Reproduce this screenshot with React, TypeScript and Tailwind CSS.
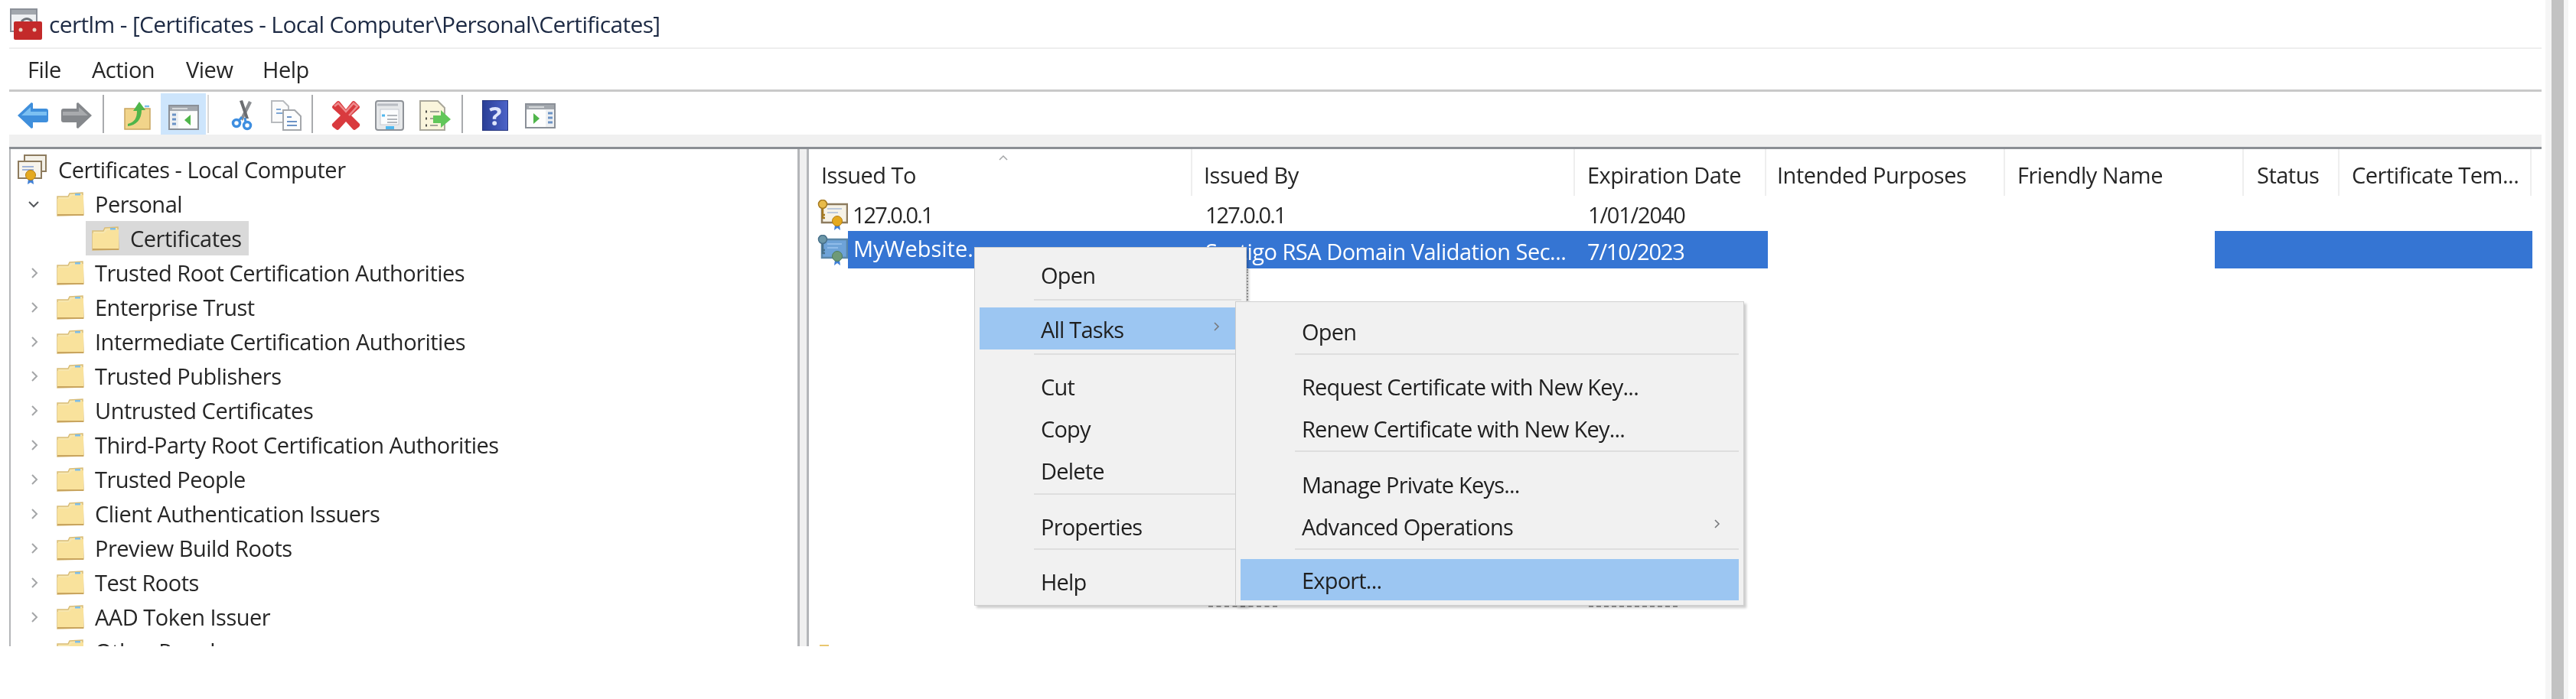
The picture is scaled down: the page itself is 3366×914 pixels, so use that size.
import type { ReactNode } from 'react'

const TREE = [
  'Trusted Root Certification Authorities',
  'Enterprise Trust',
  'Intermediate Certification Authorities',
  'Trusted Publishers',
  'Untrusted Certificates',
  'Third-Party Root Certification Authorities',
  'Trusted People',
  'Client Authentication Issuers',
  'Preview Build Roots',
  'Test Roots',
  'AAD Token Issuer',
  'Other People',
]

function Folder({ className = '' }: { className?: string }) {
  return (
    <svg width="36" height="32" viewBox="0 0 36 32" className={`shrink-0 ${className}`}>
      <path d="M1 6 L15 6 L17 2 L34 1 L35 30 L1 31 Z" fill="#f7e6ae" stroke="#d9bd78" strokeWidth="1.5" />
      <path d="M1 9 L16 9 L20 5 L35 4 L35 30 L1 31 Z" fill="#f9e29c" />
      <rect x="24" y="2" width="7" height="2.5" fill="#7dbde8" />
      <path d="M1 30 H35" stroke="#c9a55f" strokeWidth="2" />
    </svg>
  )
}

function Cert({ selected = false }: { selected?: boolean }) {
  const frame = selected ? '#5b87a8' : '#8d7b5e'
  const paper = selected ? '#6ea3d8' : '#f6f2e6'
  const gold = selected ? '#6f9a78' : '#e4a91f'
  return (
    <svg width="41" height="40" viewBox="0 0 41 40" className="shrink-0">
      <rect x="7" y="6" width="33" height="24" fill={paper} stroke={frame} strokeWidth="2.5" />
      <path d="M14 12 H33 M14 17 H28" stroke={selected ? '#9cc5ee' : '#a9bbd6'} strokeWidth="1.5" />
      <circle cx="8" cy="6" r="5.5" fill={selected ? '#6c97a8' : '#e8bb4a'} stroke={selected ? '#47708a' : '#a5791f'} strokeWidth="1.5" />
      <path d="M8 11 V25 M8 20 H11 M8 24 H11" stroke={selected ? '#47708a' : '#a5791f'} strokeWidth="2.5" />
      <path d="M24 33 L23 40 L27 37 L31 40 L30 33 Z" fill="#3f7fd6" />
      <circle cx="27" cy="28" r="6.5" fill={gold} stroke={selected ? '#4f7d5c' : '#b47e12'} strokeWidth="1" />
    </svg>
  )
}

function RootCert() {
  return (
    <svg width="40" height="40" viewBox="0 0 40 40" className="shrink-0">
      <rect x="10" y="1" width="28" height="21" fill="#f4f1e8" stroke="#8d7b5e" strokeWidth="2" />
      <rect x="2" y="9" width="30" height="22" fill="#f7f4ec" stroke="#8d7b5e" strokeWidth="2" />
      <path d="M7 16 H22 M7 20 H22" stroke="#9fb3d8" strokeWidth="2" />
      <path d="M15 32 L14 39 L18 36.5 L22 39 L21 32 Z" fill="#3f7fd6" />
      <circle cx="18" cy="27" r="6.5" fill="#e4a91f" stroke="#b47e12" strokeWidth="1" />
    </svg>
  )
}

function Arrow({ flip = false, dark, light }: { flip?: boolean; dark: string; light: string }) {
  return (
    <svg width="41" height="36" viewBox="0 0 41 36" className={`shrink-0 ${flip ? '-scale-x-100' : ''}`}>
      <path d="M1 18 L19 1 L21 2 V9 L38 9 Q41 9 41 12 V24 Q41 27 38 27 L21 27 V34 L19 35 Z" fill={dark} />
      <path d="M6 18 L18 7 V13 H39 V18 Z" fill={light} />
    </svg>
  )
}

function UpFolder() {
  return (
    <svg width="36" height="38" viewBox="0 0 36 38" className="shrink-0">
      <path d="M1 10 H34 V37 H1 Z" fill="#f1d48a" stroke="#c9a55f" strokeWidth="1.5" />
      <path d="M27 7 H33" stroke="#7dbde8" strokeWidth="2.5" />
      <path d="M5 30 C14 28 17 22 17 13 L12 13 L20 1 L28 12 L23 12 C23 24 16 32 5 33 Z" fill="#4fb54a" />
    </svg>
  )
}

function Pane({ mode }: { mode: 'left' | 'right' }) {
  return (
    <svg width="40" height="33" viewBox="0 0 40 33" className="shrink-0">
      <rect x="1" y="1" width="38" height="31" fill="#eef0f2" stroke="#8b9098" strokeWidth="2" />
      <rect x="2" y="2" width="36" height="6" fill="#a2a7ad" />
      <path d="M5 5 H25" stroke="#e6e8ea" strokeWidth="1.5" />
      <rect x={mode === 'left' ? 13 : 2} y="9" width="25" height="22" fill="#fdfdfd" />
      <path d={mode === 'left' ? 'M5 13 H10 M5 19 H10 M5 25 H10' : 'M30 13 H36 M30 19 H36 M30 25 H36'} stroke="#6c93c6" strokeWidth="3" />
      <path d={mode === 'left' ? 'M29 13 L21 20 L29 27 Z' : 'M11 13 L19 20 L11 27 Z'} fill="#4fb54a" />
    </svg>
  )
}

function Scissors() {
  return (
    <svg width="30" height="40" viewBox="0 0 30 40" className="shrink-0">
      <path d="M12 24 L23 1 L27 3 L15 27 Z" fill="#8d8f93" />
      <path d="M19 24 L11 1 L15 0 L23 24 Z" fill="#6a6c70" />
      <circle cx="7" cy="30" r="4.5" fill="none" stroke="#3e8ee0" strokeWidth="3.5" />
      <circle cx="21" cy="33" r="4.5" fill="none" stroke="#3e8ee0" strokeWidth="3.5" />
      <path d="M10 27 L14 22 M19 29 L18 23" stroke="#3e8ee0" strokeWidth="3" />
    </svg>
  )
}

function CopyDocs() {
  return (
    <svg width="40" height="40" viewBox="0 0 40 40" className="shrink-0">
      <path d="M1 1 H16 L23 8 V29 H1 Z" fill="#fbfbfb" stroke="#b8bbbf" strokeWidth="2" />
      <path d="M7 12 H13 M7 17 H17" stroke="#7ea6d4" strokeWidth="2" />
      <path d="M16 13 H31 L39 21 V39 H16 Z" fill="#fdfdfd" stroke="#a5a8ac" strokeWidth="2" />
      <path d="M21 22 H27 M21 28 H34 M21 33 H34" stroke="#6c93c6" strokeWidth="2" />
    </svg>
  )
}

function Delete() {
  return (
    <svg width="40" height="40" viewBox="0 0 40 40" className="shrink-0">
      <path d="M3 7 L8 2 Q10 0 12 2 L20 12 L28 2 Q30 0 32 2 L37 7 Q39 9 37 11 L27 20 L38 31 Q39 33 37 35 L33 38 Q31 40 29 38 L20 28 L11 38 Q9 40 7 38 L3 35 Q1 33 2 31 L13 20 L3 11 Q1 9 3 7 Z" fill="#d93a3e" />
      <path d="M5 8 L10 4 L20 15 L30 4 L35 8 L24 20" stroke="#ee8a8c" strokeWidth="2.5" fill="none" />
    </svg>
  )
}

function Properties() {
  return (
    <svg width="38" height="40" viewBox="0 0 38 40" className="shrink-0">
      <rect x="1" y="1" width="36" height="38" rx="3" fill="#e6e8ea" stroke="#8e9298" strokeWidth="2" />
      <path d="M3 6 H30" stroke="#b8bcc2" strokeWidth="3" />
      <rect x="7" y="12" width="24" height="20" fill="#fbfcfd" stroke="#c6cad0" strokeWidth="1" />
      <path d="M9 20 H13" stroke="#4fb7ee" strokeWidth="3" />
      <path d="M16 20 H29 M16 25 H29 M16 29 H29" stroke="#9aa0a8" strokeWidth="1.5" />
      <rect x="14" y="34" width="11" height="4" fill="#4fb7ee" />
    </svg>
  )
}

function ExportList() {
  return (
    <svg width="42" height="40" viewBox="0 0 42 40" className="shrink-0">
      <path d="M1 1 H24 L33 10 V39 H1 Z" fill="#faf5dc" stroke="#aaa89c" strokeWidth="2" />
      <path d="M8 15 H10 M8 24 H10 M8 33 H10" stroke="#50504a" strokeWidth="3" />
      <path d="M14 15 H26 M14 24 H24 M14 33 H24" stroke="#a5a59a" strokeWidth="2" />
      <path d="M18 20 H28 V13 L41 25 L28 36 V30 H18 Z" fill="#62c75a" />
    </svg>
  )
}

function HelpBook() {
  return (
    <div className="flex h-[40px] w-[34px] shrink-0 items-center justify-center border border-[#26367f] bg-[linear-gradient(90deg,#2a3f97,#4c63c8)]">
      <span className="text-[34px] font-bold leading-none text-[#dfe6fb]">?</span>
    </div>
  )
}

function Sep({ className }: { className: string }) {
  return <div className={`h-[50px] w-[2px] shrink-0 -translate-y-[2px] ${className}`} />
}

function Chevron({ open = false }: { open?: boolean }) {
  return (
    <svg width="16" height="16" viewBox="0 0 16 16" className="shrink-0">
      <path
        d={open ? 'M2 5 L8 11 L14 5' : 'M5 2 L11 8 L5 14'}
        fill="none"
        stroke={open ? '#55585c' : '#a4a6a8'}
        strokeWidth="2"
      />
    </svg>
  )
}

function TreeRow({ label }: { label: string }) {
  return (
    <div className="flex h-[45px] shrink-0 items-center">
      <div className="flex w-[60px] justify-center pl-[1px]"><Chevron /></div>
      <Folder className="mr-[14px]" />
      <span>{label}</span>
    </div>
  )
}

function MenuItem({ label, active, arrow, className = '' }: { label: string; active?: boolean; arrow?: string; className?: string }) {
  return (
    <div className={`relative flex h-[55px] shrink-0 items-center pl-[80px] pt-[2px] ${active ? 'bg-[#9cc6f2]' : ''} ${className}`}>
      <span>{label}</span>
      {arrow && (
        <svg width="10" height="14" viewBox="0 0 10 14" className={`absolute top-[18px] ${arrow}`}>
          <path d="M2 2 L7 7 L2 12" fill="none" stroke="#77797c" strokeWidth="1.6" />
        </svg>
      )}
    </div>
  )
}

function MenuSep({ className }: { className: string }) {
  return <div className={`h-[2px] shrink-0 bg-[#dedede] ${className}`} />
}

function Cell({ width, children, className = '' }: { width: string; children?: ReactNode; className?: string }) {
  return <div className={`flex shrink-0 items-center overflow-hidden whitespace-nowrap ${width} ${className}`}>{children}</div>
}

function HeaderCell({ label, className }: { label: string; className: string }) {
  return (
    <div className={`flex h-[61px] shrink-0 items-center border-r-2 border-[#eeeeee] pt-[7px] ${className}`}>
      <span>{label}</span>
    </div>
  )
}

export default function App() {
  return (
    <div className="relative flex h-[914px] w-[3366px] overflow-hidden bg-white text-[29px] tracking-[-0.5px] text-[#262626] blur-[0.7px] [font-family:'Open_Sans',sans-serif]">
      <div className="flex h-full w-[3321px] shrink-0 flex-col pl-[12px]">
        {/* title bar */}
        <div className="flex h-[64px] shrink-0 items-center border-b-2 border-[#eeeeee] text-[30px] tracking-[-0.65px] text-[#1d2a44]">
          <svg width="42" height="41" viewBox="0 0 42 41" className="ml-[1px] mr-[9px] shrink-0">
            <rect x="1" y="1" width="34" height="29" fill="#eef0f2" stroke="#8b9098" strokeWidth="2" />
            <rect x="2" y="2" width="32" height="6" fill="#a2a7ad" />
            <path d="M15 17 Q22 10 29 17" fill="none" stroke="#70747a" strokeWidth="3" />
            <rect x="5" y="17" width="37" height="24" rx="2" fill="#c32a2a" />
            <circle cx="14" cy="28" r="2.5" fill="#e9d0c0" />
            <circle cx="32" cy="28" r="2.5" fill="#e9d0c0" />
          </svg>
          <span>certlm - [Certificates - Local Computer\Personal\Certificates]</span>
        </div>

        {/* menu bar */}
        <div className="flex h-[56px] shrink-0 items-center border-b-[3px] border-[#c9c9c9] pl-[24px]">
          <span className="w-[84px]">File</span>
          <span className="w-[123px]">Action</span>
          <span className="w-[100px]">View</span>
          <span>Help</span>
        </div>

        {/* toolbar */}
        <div className="flex h-[56px] shrink-0 items-center pt-[6px]">
          <div className="ml-[10px]"><Arrow dark="#3f8fdc" light="#7cc0f2" /></div>
          <div className="ml-[17px]"><Arrow flip dark="#85888c" light="#a8aaad" /></div>
          <Sep className="ml-[13px] bg-[#a9abae]" />
          <div className="ml-[26px]"><UpFolder /></div>
          <div className="ml-[12px] flex h-[54px] w-[59px] shrink-0 -translate-y-[2px] items-center justify-center bg-[#cde5fc] pt-[9px]"><Pane mode="left" /></div>
          <Sep className="ml-[2px] bg-[#d8d8d8]" />
          <div className="ml-[29px]"><Scissors /></div>
          <div className="ml-[22px]"><CopyDocs /></div>
          <Sep className="ml-[13px] bg-[#a9abae]" />
          <div className="ml-[23px]"><Delete /></div>
          <div className="ml-[18px]"><Properties /></div>
          <div className="ml-[20px]"><ExportList /></div>
          <Sep className="ml-[13px] bg-[#a9abae]" />
          <div className="ml-[25px]"><HelpBook /></div>
          <div className="ml-[22px]"><Pane mode="right" /></div>
        </div>

        {/* strip under toolbar */}
        <div className="h-[19px] shrink-0 border-b-[3px] border-[#8b8f94] bg-[#f0f0f0]" />

        <div className="flex h-[650px] shrink-0 overflow-hidden">
          {/* tree */}
          <div className="flex w-[1033px] shrink-0 flex-col border-l-2 border-r-[3px] border-[#b4b6b9] pt-[4px]">
            <div className="flex h-[45px] shrink-0 items-center pl-[8px]">
              <RootCert />
              <span className="ml-[14px]">Certificates - Local Computer</span>
            </div>
            <div className="flex h-[45px] shrink-0 items-center">
              <div className="flex w-[60px] justify-center"><Chevron open /></div>
              <Folder className="mr-[14px]" />
              <span>Personal</span>
            </div>
            <div className="flex h-[45px] shrink-0 items-center pl-[98px]">
              <div className="flex h-full items-center bg-[#d9d9d9] pl-[8px] pr-[9px]">
                <Folder className="mr-[14px]" />
                <span>Certificates</span>
              </div>
            </div>
            {TREE.map((t) => <TreeRow key={t} label={t} />)}
          </div>

          <div className="w-[9px] shrink-0 bg-[#f0f0f0]" />

          {/* list */}
          <div className="relative flex min-w-0 flex-1 flex-col border-l-[3px] border-[#b4b6b9]">
            <div className="flex pl-[16px]">
              <HeaderCell label="Issued To" className="w-[485px]" />
              <HeaderCell label="Issued By" className="w-[500px] pl-[15px]" />
              <HeaderCell label="Expiration Date" className="w-[250px] pl-[16px]" />
              <HeaderCell label="Intended Purposes" className="w-[312px] pl-[14px]" />
              <HeaderCell label="Friendly Name" className="w-[312px] pl-[16px]" />
              <HeaderCell label="Status" className="w-[125px] pl-[17px]" />
              <HeaderCell label="Certificate Tem..." className="w-[251px] pl-[16px]" />
            </div>
            <svg width="14" height="8" viewBox="0 0 14 8" className="absolute left-[247px] top-[7px]">
              <path d="M2 7 L7 2 L12 7" fill="none" stroke="#a4a6a8" strokeWidth="1.5" />
            </svg>

            <div className="flex h-[46px] shrink-0 items-center pl-[10px] pt-[4px]">
              <Cert />
              <Cell width="w-[467px]" className="pl-[6px] tracking-[-2px]">127.0.0.1</Cell>
              <Cell width="w-[500px]" className="tracking-[-2px]">127.0.0.1</Cell>
              <Cell width="w-[250px]" className="tracking-[-1.2px]">1/01/2040</Cell>
            </div>

            <div className="flex h-[49px] shrink-0 items-center pl-[10px]">
              <Cert selected />
              <div className="flex h-full w-[1202px] shrink-0 items-center bg-[#3575d3] text-white">
                <Cell width="w-[467px]" className="-translate-y-[2px] pl-[7px] tracking-normal">MyWebsite.,</Cell>
                <Cell width="w-[499px]" className="translate-y-[2px] pr-[10px]">Sectigo RSA Domain Validation Sec...</Cell>
                <Cell width="w-[236px]" className="translate-y-[2px] tracking-[-1.2px]">7/10/2023</Cell>
              </div>
              <div className="w-[584px] shrink-0" />
              <div className="h-full w-[415px] shrink-0 bg-[#3575d3]" />
            </div>

            <div className="absolute left-[14px] top-[648px] h-[3px] w-[12px] bg-[#e9c76f]" />
            {/* bits of the rows below that show past the menu edge */}
            <div className="absolute left-[522px] top-[597px] w-[90px] border-t-2 border-dashed border-[#a0a0a0]" />
            <div className="absolute left-[1019px] top-[597px] w-[116px] border-t-2 border-dashed border-[#a0a0a0]" />
          </div>
        </div>
      </div>

      <div className="h-full w-[5px] shrink-0" />
      <div className="h-full w-[8px] shrink-0 bg-[#f5f5f5]" />
      <div className="h-full w-[16px] shrink-0 bg-[#c2c2c2]" />
      <div className="h-full w-[6px] shrink-0 bg-[#f5f5f5]" />

      {/* context menu */}
      <div className="absolute left-[1273px] top-[323px] flex h-[469px] w-[356px] flex-col border border-[#cfcfcf] bg-[#f1f1f1] px-[6px] pt-[7px] tracking-[-0.8px] text-[#1f1f1f] shadow-[3px_3px_3px_rgba(0,0,0,0.2)]">
        <MenuItem label="Open" className="-mt-[1px] !h-[58px]" />
        <MenuSep className="mb-[9px] ml-[71px] mt-[3px]" />
        <MenuItem label="All Tasks" active arrow="left-[305px]" />
        <MenuSep className="mb-[13px] ml-[71px] mt-[5px]" />
        <MenuItem label="Cut" />
        <MenuItem label="Copy" />
        <MenuItem label="Delete" />
        <MenuSep className="mb-[13px] ml-[71px] mt-[3px]" />
        <MenuItem label="Properties" />
        <MenuSep className="mb-[13px] ml-[71px] mt-[2px]" />
        <MenuItem label="Help" />
      </div>
      <div className="absolute left-[1629px] top-[352px] h-[44px] border-r-2 border-dotted border-[#8a8a8a]" />

      {/* submenu */}
      <div className="absolute left-[1614px] top-[394px] flex h-[398px] w-[665px] flex-col border border-[#cfcfcf] bg-[#f1f1f1] px-[6px] pt-[10px] tracking-[-0.8px] text-[#1f1f1f] shadow-[3px_3px_3px_rgba(0,0,0,0.2)]">
        <MenuItem label="Open" />
        <MenuSep className="mb-[13px] ml-[71px] mt-[2px]" />
        <MenuItem label="Request Certificate with New Key..." />
        <MenuItem label="Renew Certificate with New Key..." />
        <MenuSep className="mb-[14px] ml-[71px] mt-[2px]" />
        <MenuItem label="Manage Private Keys..." />
        <MenuItem label="Advanced Operations" arrow="left-[618px]" />
        <MenuSep className="mb-[12px] ml-[71px] mt-[2px]" />
        <MenuItem label="Export..." active className="!h-[54px]" />
      </div>
    </div>
  )
}
